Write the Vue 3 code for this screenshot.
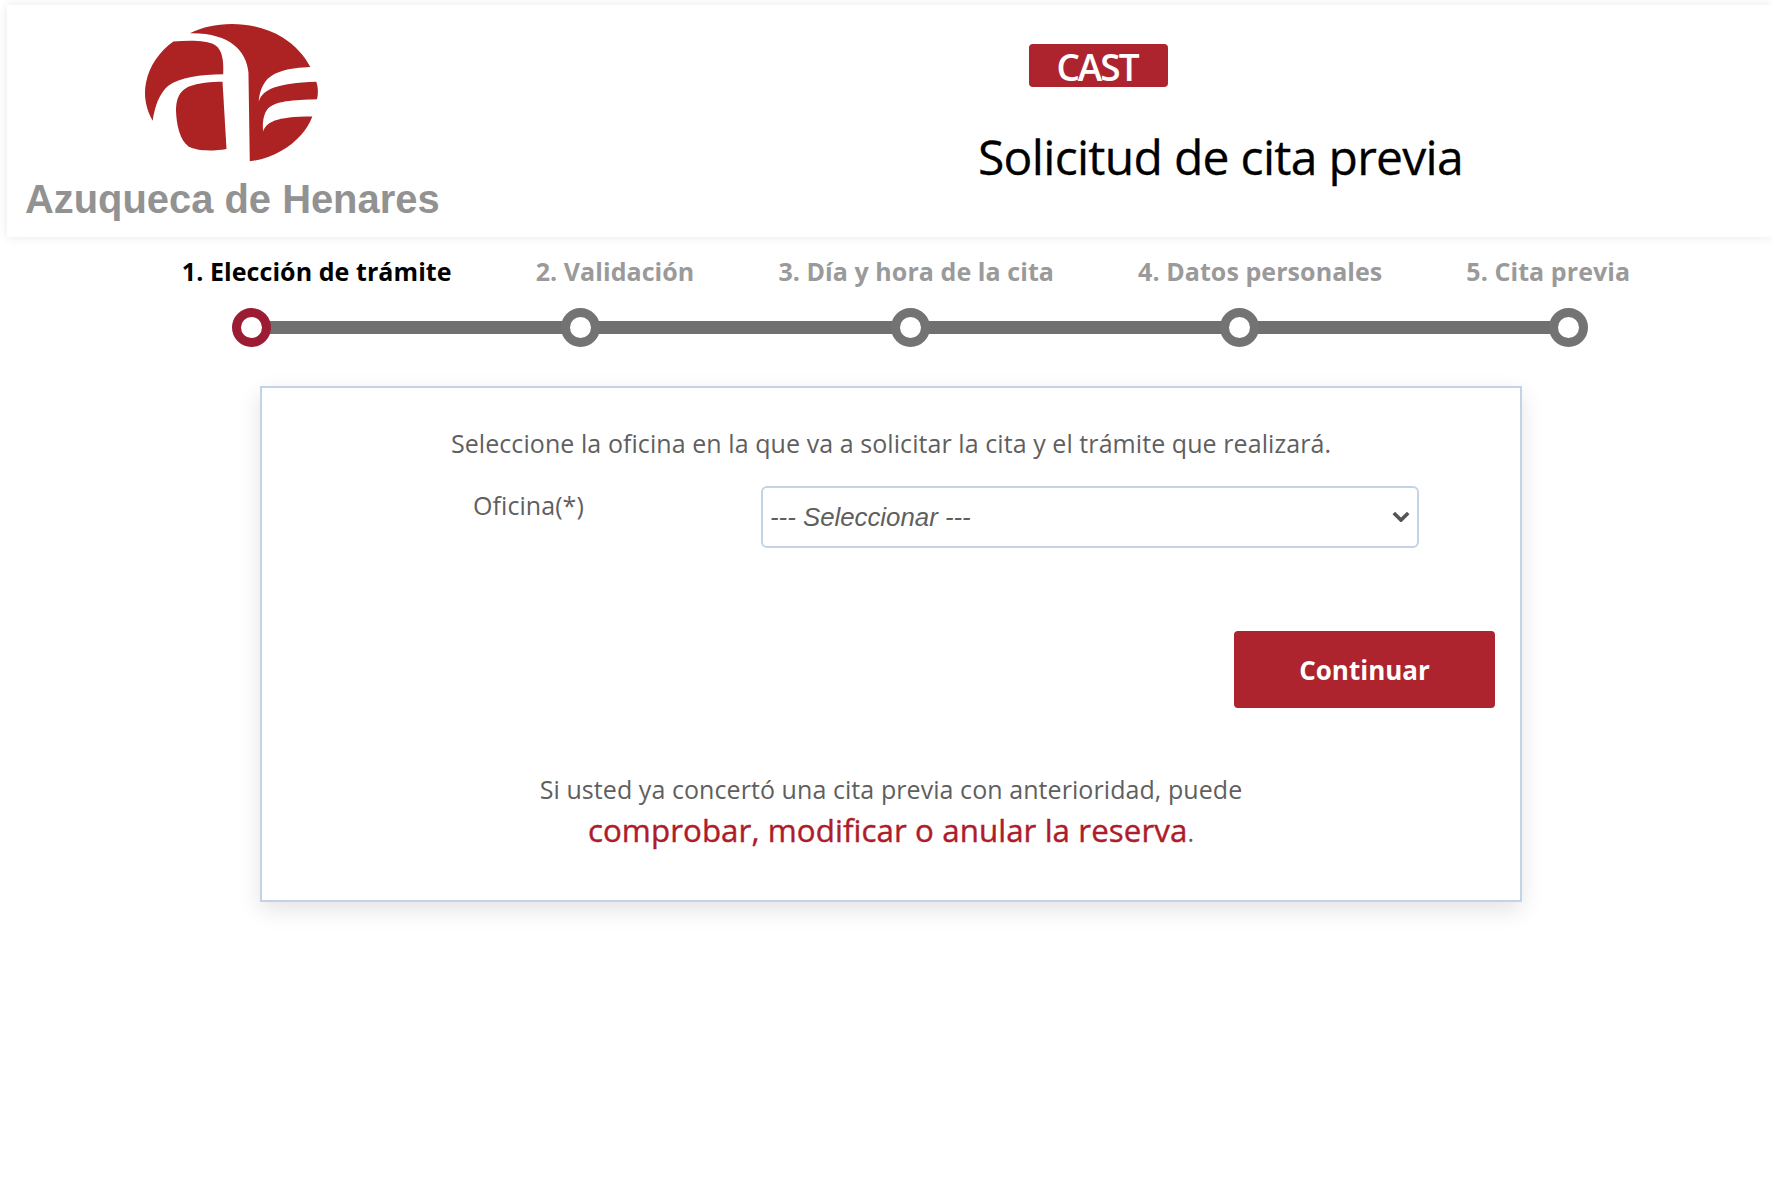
<template>
  <div class="page">
    <header class="top">
      <div class="brand">
        <svg class="logo" viewBox="420 60 550 430" width="183" height="143">
          <path d="M570 97 C640 60 760 55 850 110 C885 132 915 165 932 198 C870 200 815 212 795 245 C783 262 778 285 777 302 C790 265 830 248 950 243 C956 260 956 280 952 295 C880 297 825 300 803 325 C790 342 788 370 790 392 C800 365 825 347 938 347 C925 385 890 425 845 450 C815 468 785 477 750 482 L746 215 C740 150 690 95 570 97 Z" />
          <path d="M520 122 C570 118 620 118 645 132 C668 146 672 180 670 220 C600 222 540 228 505 255 C478 278 464 318 458 360 C438 325 430 285 438 245 C448 195 480 150 520 122 Z" />
          <path d="M668 243 L680 445 C640 452 590 452 565 437 C540 418 530 375 528 330 C528 295 538 272 565 258 C595 246 635 243 668 243 Z" />
        </svg>
        <div class="brand-name">Azuqueca de Henares</div>
      </div>
      <div class="head-right">
        <span class="lang">CAST</span>
        <h1>Solicitud de cita previa</h1>
      </div>
    </header>

    <div class="steps">
      <div class="labels">
        <span v-for="(s, i) in steps" :key="s" :class="{ on: i === 0 }">{{ s }}</span>
      </div>
      <div class="track">
        <span v-for="(s, i) in steps" :key="s" class="dot" :class="{ on: i === 0 }"></span>
      </div>
    </div>

    <main class="card">
      <p class="intro">Seleccione la oficina en la que va a solicitar la cita y el trámite que realizará.</p>
      <div class="field">
        <label for="oficina">Oficina(*)</label>
        <div class="select-wrap">
          <select id="oficina" v-model="oficina">
            <option value="">--- Seleccionar ---</option>
          </select>
          <svg class="chevron" viewBox="0 0 20 12" width="18" height="11">
            <path d="M2 2 L10 10 L18 2" />
          </svg>
        </div>
      </div>
      <div class="actions">
        <button type="button">Continuar</button>
      </div>
      <p class="note">Si usted ya concertó una cita previa con anterioridad, puede</p>
      <p class="manage"><a href="#">comprobar, modificar o anular la reserva</a><span>.</span></p>
    </main>
  </div>
</template>

<script setup>
import { ref } from 'vue'

const oficina = ref('')
const steps = [
  '1. Elección de trámite',
  '2. Validación',
  '3. Día y hora de la cita',
  '4. Datos personales',
  '5. Cita previa'
]
</script>

<style>
html,
body {
  background: #fff;
}
</style>

<style scoped>
.page {
  width: 1772px;
  height: 1181px;
  overflow: hidden;
  background: #fff;
  font-family: "Open Sans", "Noto Sans", sans-serif;
  color: #5f5f5f;
}

.top {
  display: flex;
  height: 232px;
  margin: 5px 0 0 7px;
  background: #fff;
  box-shadow: 0 0 10px rgba(0, 0, 0, 0.09);
}

.brand {
  width: 971px;
  padding: 16px 0 0 18px;
  box-sizing: border-box;
}

.logo {
  display: block;
  margin-left: 115px;
}

.logo path {
  fill: #ad2323;
}

.brand-name {
  margin-top: 13px;
  font-family: "Liberation Sans", Arial, sans-serif;
  font-weight: 700;
  font-size: 39.9px;
  line-height: 45px;
  color: #929292;
  white-space: nowrap;
}

.head-right {
  padding-top: 39px;
}

.lang {
  display: block;
  width: 139px;
  height: 43px;
  margin-left: 51px;
  padding-right: 3px;
  box-sizing: border-box;
  background: #ae242e;
  border-radius: 4px;
  color: #fff;
  font-size: 37px;
  font-weight: 600;
  letter-spacing: -2px;
  line-height: 45px;
  text-align: center;
}

h1 {
  margin: 39px 0 0;
  font-size: 48px;
  font-weight: 400;
  line-height: 62px;
  letter-spacing: -0.7px;
  -webkit-text-stroke: 0.3px #000;
  color: #000;
  white-space: nowrap;
}

.steps {
  margin-top: 14px;
}

.labels {
  display: flex;
  justify-content: center;
  gap: 84px;
  width: 1812px;
  font-size: 25px;
  font-weight: 700;
  line-height: 40px;
  letter-spacing: 0.07px;
  color: #9a9a9a;
  white-space: nowrap;
}

.labels .on {
  color: #000;
}

.track {
  display: flex;
  justify-content: space-between;
  width: 1356px;
  margin: 17px 0 0 232px;
  background: linear-gradient(#6f706f, #6f706f) center / calc(100% - 20px) 13px no-repeat;
}

.dot {
  width: 39px;
  height: 39px;
  box-sizing: border-box;
  border: 9px solid #737373;
  border-radius: 50%;
  background: #fff;
}

.dot.on {
  border-color: #9c1c33;
}

.card {
  width: 1262px;
  height: 516px;
  box-sizing: border-box;
  margin: 39px 0 0 260px;
  padding: 37px 25px 0;
  border: 2px solid #c3d3e6;
  background: #fff;
  box-shadow: 0 8px 22px rgba(0, 0, 0, 0.11);
  font-size: 25px;
  letter-spacing: 0.07px;
}

.intro,
.note,
.manage {
  margin: 0;
  text-align: center;
}

.intro {
  line-height: 36px;
}

.field {
  display: flex;
  margin-top: 25px;
}

.field label {
  width: 287px;
  padding-left: 186px;
  margin-right: 1px;
  box-sizing: content-box;
  line-height: 38px;
}

.select-wrap {
  position: relative;
  width: 658px;
  height: 62px;
}

select {
  width: 100%;
  height: 100%;
  padding: 0 7px;
  border: 2px solid #c3d3e6;
  border-radius: 6px;
  background: #fff;
  appearance: none;
  font-family: "Liberation Sans", Arial, sans-serif;
  font-size: 25.8px;
  font-style: italic;
  color: #5f5f5f;
}

.chevron {
  position: absolute;
  right: 9px;
  top: 25px;
}

.chevron path {
  fill: none;
  stroke: #555;
  stroke-width: 4;
}

.actions {
  display: flex;
  justify-content: flex-end;
  margin-top: 83px;
}

button {
  width: 261px;
  height: 77px;
  border: none;
  border-radius: 4px;
  background: #ae242e;
  color: #fff;
  font-family: inherit;
  font-size: 26px;
  font-weight: 700;
}

.note {
  margin-top: 63px;
  line-height: 36px;
}

.manage {
  margin-top: 1px;
  line-height: 44px;
}

.manage a {
  color: #ae1c2b;
  font-size: 31.3px;
  -webkit-text-stroke: 0.4px #ae1c2b;
  text-decoration: none;
}
</style>
